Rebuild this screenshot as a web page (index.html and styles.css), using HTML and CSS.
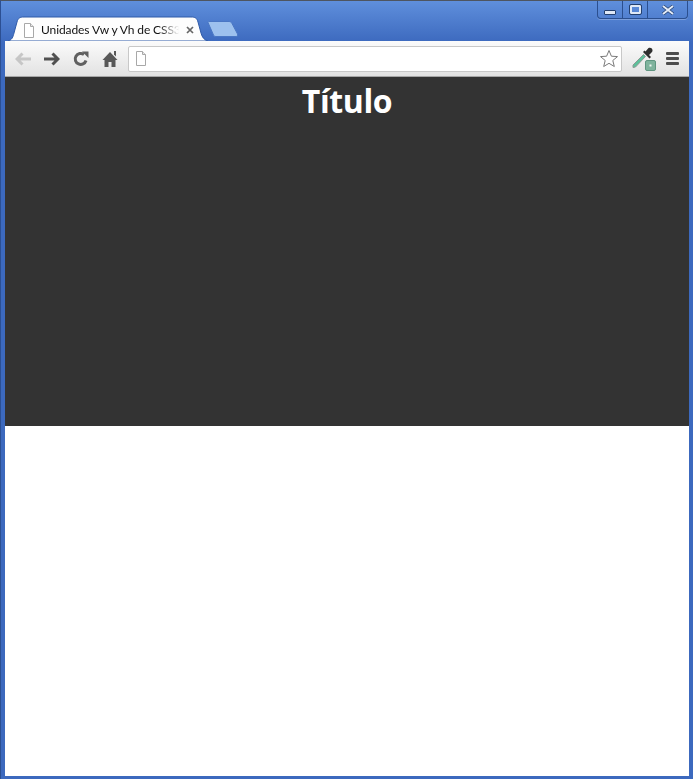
FILE: index.html
```html
<!DOCTYPE html>
<html lang="es">
<head>
    <meta charset="UTF-8" />
    <title>Unidades Vw y Vh de CSS3</title>
    <link rel="stylesheet" href="styles.css">
</head>
<body>
    <div class="window">
        <div class="titlebar">
            <div class="tab">
                <svg class="tab-shape" width="202" height="25" viewBox="0 0 202 25">
                    <path d="M0 25 C4 24 5 21 6 17 L9 6 C10 2 12 1 16 1 L183 1 C187 1 189 2 190 6 L193 17 C194 21 196 24 200 25 Z" fill="#fdfdfd" stroke="#2f5aa8" stroke-width="1"/>
                </svg>
                <svg class="page-icon" width="12" height="15" viewBox="0 0 12 15">
                    <path d="M1.500 .5H7.500L10.500 3.500V14.500H1.500Z" fill="#fff" stroke="#a8a8a8"/>
                    <path d="M7.500 .5V3.500H10.500" fill="#e8e8e8" stroke="#a8a8a8"/>
                </svg>
                <span class="tab-title">Unidades Vw y Vh de CSS3</span>
                <svg class="tab-close" width="8" height="8" viewBox="0 0 8 8">
                    <path d="M1 1L7 7M7 1L1 7" stroke="#666" stroke-width="1.700"/>
                </svg>
            </div>
            <svg class="new-tab" width="32" height="16" viewBox="0 0 32 16">
                <path d="M1 1.500C1 1 1.500 .5 2 .5H22C23.500 .5 24 1 25 2.500L30.500 13C31 14.500 30.500 15.500 29 15.500H9C7.500 15.500 7 15 6.500 14Z" fill="#9dc1ee" stroke="#4a77c4"/>
            </svg>
            <div class="controls">
                <div class="control control-min"><span class="min-bar"></span></div>
                <div class="control control-max"><span class="max-box"></span></div>
                <div class="control control-close">
                    <svg width="14" height="10" viewBox="0 0 14 10">
                        <path d="M2 1L12 9M12 1L2 9" stroke="#24406f" stroke-width="3.400"/>
                        <path d="M2 1L12 9M12 1L2 9" stroke="#e4ecf8" stroke-width="2"/>
                    </svg>
                </div>
            </div>
        </div>

        <div class="toolbar">
            <svg class="tool" width="16" height="14" viewBox="0 0 16 14">
                <path d="M7.500 1.500L2 7L7.500 12.500M3 7H16" fill="none" stroke="#c6c6c6" stroke-width="3"/>
            </svg>
            <svg class="tool" width="16" height="14" viewBox="0 0 16 14">
                <path d="M8.500 1.500L14 7L8.500 12.500M13 7H0" fill="none" stroke="#505050" stroke-width="3"/>
            </svg>
            <svg class="tool" width="16" height="16" viewBox="0 0 16 16">
                <path d="M13 9.500A5.500 5.500 0 1 1 11 3.500" fill="none" stroke="#606060" stroke-width="3"/>
                <path d="M9 .5H15.500V7Z" fill="#606060"/>
            </svg>
            <svg class="tool tool-home" width="16" height="16" viewBox="0 0 16 16">
                <path d="M8 1L15.500 9H13.500V16H9.500V11H6.500V16H2.500V9H.5Z" fill="#585858"/>
                <path d="M12 0H14V5.500L12 3.500Z" fill="#585858"/>
            </svg>
            <div class="omnibox">
                <svg width="12" height="15" viewBox="0 0 12 15">
                    <path d="M1.500 .5H7.500L10.500 3.500V14.500H1.500Z" fill="#fff" stroke="#a8a8a8"/>
                    <path d="M7.500 .5V3.500H10.500" fill="#e8e8e8" stroke="#a8a8a8"/>
                </svg>
                <svg width="20" height="19" viewBox="0 0 20 19">
                    <path d="M10 1.500L12.400 7.200L18.500 7.600L13.800 11.500L15.300 17.500L10 14.300L4.700 17.500L6.200 11.500L1.500 7.600L7.600 7.200Z" fill="#fff" stroke="#7a7a7a"/>
                </svg>
            </div>
            <svg class="dropper" width="26" height="26" viewBox="0 0 26 26">
                <path d="M1 19L11.500 8.500L13.500 10.500L3.500 21L1 21.500Z" fill="#5cc09a" stroke="#8a9a94"/>
                <path d="M11 6L17.500 12.500L19 11L17 9L20 6C21.500 4.500 20 .5 16.500 2L13.500 5.500L12.500 4.500Z" fill="#2e2e2e"/>
                <rect x="13.500" y="14.500" width="10" height="10" rx="1.500" fill="#7fb39d" stroke="#5f9580"/>
                <rect x="17.500" y="18.500" width="2" height="2" fill="#f0f7f3"/>
            </svg>
            <div class="menu">
                <span></span>
                <span></span>
                <span></span>
            </div>
        </div>

        <div class="page">
            <header class="hero">
                <h1>Título</h1>
            </header>
        </div>
    </div>
</body>
</html>
```

FILE: styles.css
```css
html, body {
    margin: 0;
    padding: 0;
    background-color: #fff;
}
.window {
    box-sizing: border-box;
    width: 693px;
    height: 779px;
    padding: 0 4px 3px 4px;
    display: flex;
    flex-direction: column;
    background: linear-gradient(#5f8fdc, #3c69be 42px);
    border-top: 1px solid #4e5560;
    border-left: 1px solid #2c4f92;
}
.titlebar {
    height: 40px;
    flex-shrink: 0;
    display: flex;
    align-items: flex-end;
}
.tab {
    position: relative;
    width: 202px;
    height: 25px;
    margin-left: 3px;
    flex-shrink: 0;
    display: flex;
    align-items: center;
    padding-top: 3px;
    box-sizing: border-box;
}
.tab-shape {
    position: absolute;
    left: 0;
    top: 0;
}
.page-icon {
    position: relative;
    margin-left: 15px;
    flex-shrink: 0;
}
.tab-title {
    position: relative;
    width: 141px;
    margin-left: 6px;
    margin-bottom: 2px;
    overflow: hidden;
    white-space: nowrap;
    font-family: "Lato", sans-serif;
    font-size: 12px;
    letter-spacing: -0.1px;
    color: #111;
    -webkit-mask-image: linear-gradient(to right, #000 84%, transparent 98%);
    mask-image: linear-gradient(to right, #000 84%, transparent 98%);
}
.tab-close {
    position: relative;
    margin-left: 4px;
}
.new-tab {
    margin: 0 0 4px -3px;
    flex-shrink: 0;
}
.controls {
    align-self: flex-start;
    display: flex;
    margin-left: auto;
    margin-right: 1px;
    height: 17px;
    border: 1px solid #2b4f8f;
    border-top: 0;
    border-radius: 0 0 4px 4px;
    box-shadow: 0 1px 0 rgba(255, 255, 255, 0.25);
}
.control {
    display: flex;
    align-items: center;
    justify-content: center;
    border-left: 1px solid #2b4f8f;
}
.control:first-child {
    border-left: 0;
}
.control-min {
    width: 24px;
}
.control-max {
    width: 24px;
}
.control-close {
    width: 39px;
}
.min-bar {
    display: block;
    width: 10px;
    height: 3px;
    margin-top: 5px;
    background-color: #dfe8f6;
    border: 1px solid #24406f;
    border-radius: 1px;
}
.max-box {
    display: block;
    box-sizing: border-box;
    width: 11px;
    height: 9px;
    border: 2px solid #dfe8f6;
    outline: 1px solid #24406f;
    border-radius: 1px;
}
.toolbar {
    height: 36px;
    flex-shrink: 0;
    display: flex;
    align-items: center;
    padding-left: 10px;
    box-sizing: border-box;
    background: linear-gradient(#fbfbfb, #e2e2e2);
    border-bottom: 1px solid #a6a6a6;
}
.tool {
    margin-right: 13px;
    flex-shrink: 0;
}
.tool-home {
    margin-right: 10px;
}
.omnibox {
    box-sizing: border-box;
    width: 494px;
    height: 26px;
    display: flex;
    align-items: center;
    justify-content: space-between;
    padding: 0 2px 0 6px;
    background-color: #fff;
    border: 1px solid #c8c8c8;
    border-radius: 2px;
}
.dropper {
    margin-left: 10px;
    flex-shrink: 0;
}
.menu {
    margin-left: 8px;
    display: flex;
    flex-direction: column;
    gap: 2px;
}
.menu span {
    display: block;
    width: 13px;
    height: 3px;
    border-radius: 1px;
    background-color: #4d4d4d;
}
.page {
    flex: 1;
    background-color: #fff;
}
.hero {
    height: 349px;
    background-color: #333;
}
h1 {
    margin: 0;
    text-align: center;
    font-family: "Open Sans", sans-serif;
    font-size: 32px;
    font-weight: 700;
    letter-spacing: -0.4px;
    line-height: 48px;
    color: #fff;
}
```
